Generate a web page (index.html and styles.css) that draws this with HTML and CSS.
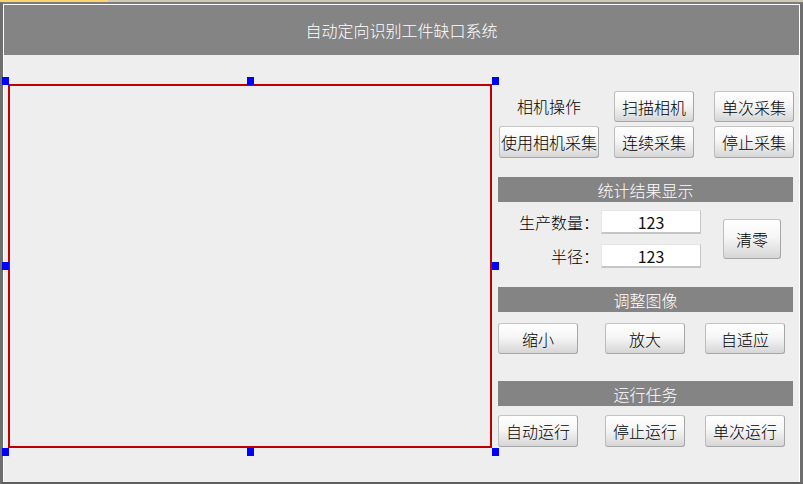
FILE: index.html
```html
<!DOCTYPE html>
<html lang="zh-CN">
<head>
<meta charset="utf-8">
<title>自动定向识别工件缺口系统</title>
<link rel="stylesheet" href="styles.css">
</head>
<body>
<div class="strip"></div>
<div class="frame">
  <div class="client">
    <header class="app-title">自动定向识别工件缺口系统</header>
    <main class="workspace">
      <div class="viewport">
        <span class="handle h-tl"></span>
        <span class="handle h-tc"></span>
        <span class="handle h-tr"></span>
        <span class="handle h-ml"></span>
        <span class="handle h-mr"></span>
        <span class="handle h-bl"></span>
        <span class="handle h-bc"></span>
        <span class="handle h-br"></span>
      </div>
      <aside class="panel">
        <div class="cam-grid">
          <span class="cam-label">相机操作</span>
          <button class="btn">扫描相机</button>
          <button class="btn">单次采集</button>
          <button class="btn btn-wide">使用相机采集</button>
          <button class="btn">连续采集</button>
          <button class="btn">停止采集</button>
        </div>

        <div class="section-title sec-stats">统计结果显示</div>
        <div class="stats">
          <span class="stat-label">生产数量：</span>
          <span class="stat-value">123</span>
          <button class="btn btn-reset">清零</button>
          <span class="stat-label">半径：</span>
          <span class="stat-value">123</span>
        </div>

        <div class="section-title sec-image">调整图像</div>
        <div class="btn-row row-image">
          <button class="btn">缩小</button>
          <button class="btn">放大</button>
          <button class="btn">自适应</button>
        </div>

        <div class="section-title sec-run">运行任务</div>
        <div class="btn-row row-run">
          <button class="btn">自动运行</button>
          <button class="btn">停止运行</button>
          <button class="btn">单次运行</button>
        </div>
      </aside>
    </main>
  </div>
</div>
</body>
</html>
```

FILE: styles.css
```css
* {
  box-sizing: border-box;
}

html,
body {
  margin: 0;
  padding: 0;
  width: 803px;
  height: 484px;
  overflow: hidden;
  background: #eeeeee;
  font-family: "Noto Sans CJK SC", "Noto Sans", sans-serif;
  font-size: 16px;
  font-weight: 300;
  color: #000;
}

/* thin caption strip along the very top of the window */
.strip {
  height: 2px;
  background: linear-gradient(to right, #ffd36e 0, #ffd36e 108px, #cfc8b4 108px, #cfc8b4 100%);
}

.frame {
  height: 482px;
  border-top: 2px solid #7c7c7c;
  border-left: 3px solid #6e6e6e;
  border-right: 3px solid #6e6e6e;
  border-bottom: 2px solid #5e5e5e;
}

.client {
  height: 100%;
  border: 1px solid #ffffff;
  border-bottom: 0;
  background: #eeeeee;
  display: flex;
  flex-direction: column;
}

.app-title {
  height: 50px;
  flex: none;
  background: #848484;
  color: #ffffff;
  display: flex;
  align-items: center;
  justify-content: center;
  line-height: 1;
}

.workspace {
  flex: 1;
  display: flex;
  align-items: flex-start;
}

/* image display area with its selection handles */
.viewport {
  position: relative;
  width: 484px;
  height: 364px;
  margin: 29px 0 0 4px;
  border: 2px solid #c00000;
  background: #eeeeee;
}

.handle {
  position: absolute;
  width: 7px;
  height: 8px;
  background: #0000ff;
}

.h-tl { left: -8px; top: -9px; }
.h-tc { left: 237px; top: -9px; }
.h-tr { right: -9px; top: -9px; }
.h-ml { left: -8px; top: 176px; }
.h-mr { right: -9px; top: 176px; }
.h-bl { left: -8px; bottom: -10px; }
.h-bc { left: 237px; bottom: -10px; }
.h-br { right: -9px; bottom: -10px; }

.panel {
  width: 296px;
  margin-left: 6px;
  padding-top: 36px;
  display: flex;
  flex-direction: column;
}

.btn {
  font: inherit;
  color: #000;
  padding: 0;
  height: 31px;
  width: 80px;
  border: 1px solid #a6a6a6;
  border-top-color: #c4c4c4;
  border-left-color: #bcbcbc;
  border-radius: 3px;
  background: linear-gradient(#ffffff 0%, #f6f6f6 45%, #e2e2e2 80%, #d6d6d6 100%);
  line-height: 1;
}

.cam-grid {
  display: grid;
  grid-template-columns: 115px 100px 80px;
  grid-template-rows: 31px 32px;
  row-gap: 4px;
  padding-left: 1px;
}

.cam-grid .btn {
  height: 100%;
}

.btn-wide {
  width: 100px;
}

.cam-label {
  width: 100px;
  display: flex;
  align-items: center;
  justify-content: center;
  padding-bottom: 2px;
}

.section-title {
  height: 25px;
  width: 295px;
  background: #848484;
  color: #ffffff;
  display: flex;
  align-items: center;
  justify-content: center;
  line-height: 1;
}

.sec-stats { margin-top: 19px; }
.sec-image { margin-top: 19px; }
.sec-run { margin-top: 27px; }

.stats {
  margin-top: 8px;
  display: grid;
  grid-template-columns: 103px 100px 80px;
  grid-template-rows: 24px 24px;
  row-gap: 10px;
}

.stat-label {
  display: flex;
  align-items: center;
  justify-content: flex-end;
  padding-right: 2px;
}

.stat-value {
  display: flex;
  align-items: center;
  justify-content: center;
  background: #ffffff;
  border: 1px solid #e6e6e6;
  border-right-color: #c6c6c6;
  border-bottom: 2px solid #c6c6c6;
  color: #101010;
  font-weight: 400;
}

.btn-reset {
  grid-column: 3;
  grid-row: 1 / span 2;
  align-self: center;
  width: 58px;
  height: 40px;
  margin-left: 22px;
}

.btn-row {
  display: grid;
  grid-template-columns: 107px 100px 80px;
}

.row-image {
  margin-top: 11px;
}

.row-run {
  margin-top: 9px;
}

.row-run .btn {
  height: 32px;
}
```
